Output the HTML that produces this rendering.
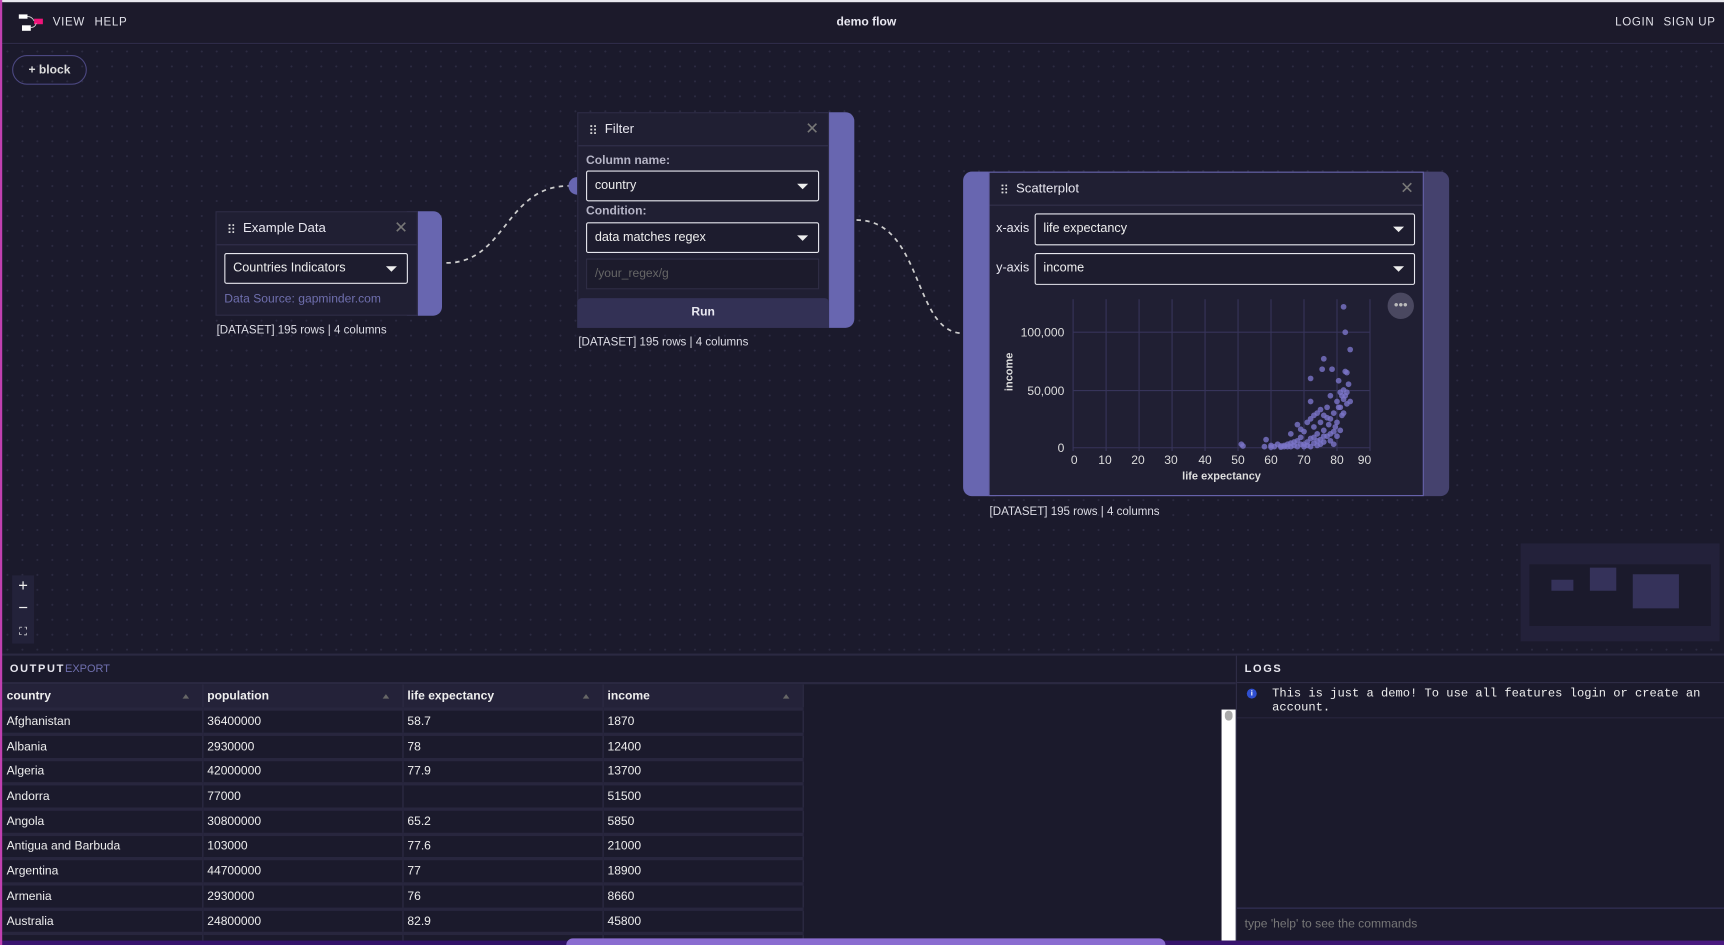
<!DOCTYPE html>
<html><head><meta charset="utf-8"><style>
*{box-sizing:border-box;margin:0;padding:0}
html,body{width:1724px;height:945px;overflow:hidden;background:#1b1a2c}
#s{position:absolute;left:0;top:0;width:1568px;height:859px;overflow:hidden;transform:scale(1.0995,1.1001);transform-origin:0 0;font-family:"Liberation Sans",sans-serif;color:#e8e7f0;background:#1b1a2c}
.a{position:absolute}
.canvas{left:0;top:40px;width:1568px;height:554px;background-color:#1b1a2c;background-image:radial-gradient(#2c2b42 0.8px,transparent 1px);background-size:13.6px 13.6px}
.hdr{left:0;top:0;width:1568px;height:40px;background:#1c1a2b;border-bottom:1px solid #2e2b48;border-top:2px solid #e8e8ee}
.nav{font-size:10.5px;letter-spacing:0.6px;color:#e0e0e8;top:14px}
.node{background:#201f33;border:1px solid #2e2c46}
.nh{height:30px;border-bottom:1px solid #33314d;font-size:12px;line-height:29px;padding-left:24px;position:relative}
.nh:before{content:"";position:absolute;left:10px;top:10px;width:6px;height:9px;background-image:radial-gradient(#ddd 0.9px,transparent 1.1px);background-size:3.5px 3.2px}
.x{position:absolute;right:8px;top:0;color:#777;font-size:15px}
.sel{position:absolute;border:1.5px solid #e6e6ee;border-radius:2px;background:#1d1c2e;font-size:11.5px;line-height:26px;padding-left:7px;color:#eee}
.sel:after{content:"";position:absolute;right:9px;top:11px;border-left:5px solid transparent;border-right:5px solid transparent;border-top:5px solid #eee}
.lbl{font-size:11px;font-weight:bold;color:#b5b4c6}
.ds{font-size:10.5px;color:#dddde6}
table{border-collapse:collapse;font-size:11px}
td,th{border-right:1px solid #2f2d47;border-bottom:3px solid #28263e;height:22.7px;padding:0 4px;text-align:left;width:182px;color:#eee;position:relative}
th{background:#242239;font-weight:bold}
th:after{content:"";position:absolute;right:12px;top:9px;border-left:3px solid transparent;border-right:3px solid transparent;border-bottom:4px solid #666}
.mono{font-family:"Liberation Mono",monospace}
</style></head><body><div id="s">
<div class="a canvas"></div>
<div class="a" style="left:0;top:0;width:2px;height:859px;background:#c040b0;z-index:5"></div>
<div class="a hdr"></div>
<svg class="a" style="left:17px;top:13px" width="24" height="16"><rect x="0" y="0" width="8" height="4" fill="#fff"/><rect x="3" y="10" width="8" height="5" fill="#fff"/><rect x="14" y="4" width="8" height="5" fill="#f0147a"/><path d="M8 2 Q12 2 14 6 M11 12 Q15 12 16 8" stroke="#ccc" fill="none" stroke-width="0.8"/></svg>
<div class="a nav" style="left:48px">VIEW</div>
<div class="a nav" style="left:86px">HELP</div>
<div class="a" style="left:0;width:1576px;top:14px;text-align:center;font-size:11px;font-weight:bold">demo flow</div>
<div class="a nav" style="left:1469px">LOGIN</div>
<div class="a nav" style="left:1513px">SIGN UP</div>
<div class="a" style="left:11px;top:50px;width:68px;height:27px;border:1px solid #4b4780;border-radius:14px;font-size:11px;font-weight:bold;text-align:center;line-height:26px;color:#ddd">+ block</div>

<svg class="a" style="left:0;top:0" width="1568" height="600">
<path d="M406 239 C460 239 460 169 517 169" stroke="#ccc" stroke-width="1.6" fill="none" stroke-dasharray="4 4"/>
<path d="M779 200 C840 200 830 303 876 303" stroke="#ccc" stroke-width="1.6" fill="none" stroke-dasharray="4 4"/>
<path d="M525 161 a8 8 0 0 0 0 16 z" fill="#6866b0"/>
</svg>

<div class="a" style="left:370px;top:192px;width:32px;height:95px;background:#6866b0;border-radius:0 8px 8px 0"></div>
<div class="a node" style="left:196px;top:192px;width:184px;height:95px"><div class="nh">Example Data<span class="x">✕</span></div>
<div class="sel" style="left:7px;top:37px;width:167px;height:28px">Countries Indicators</div>
<div class="a" style="left:7px;top:73px;font-size:11px;color:#6f6fae">Data Source: gapminder.com</div></div>
<div class="a ds" style="left:197px;top:294px">[DATASET] 195 rows | 4 columns</div>

<div class="a" style="left:744px;top:102px;width:33px;height:196px;background:#6866b0;border-radius:0 8px 8px 0"></div>
<div class="a node" style="left:525px;top:102px;width:229px;height:196px"><div class="nh">Filter<span class="x">✕</span></div>
<div class="a lbl" style="left:7px;top:37px">Column name:</div>
<div class="sel" style="left:7px;top:52px;width:212px;height:28px">country</div>
<div class="a lbl" style="left:7px;top:83px">Condition:</div>
<div class="sel" style="left:7px;top:99px;width:212px;height:28px">data matches regex</div>
<div class="a" style="left:7px;top:132px;width:212px;height:28px;border:1px solid #2f2d45;background:#1c1b2c;font-size:11px;color:#666;line-height:26px;padding-left:7px">/your_regex/g</div>
<div class="a" style="left:-1px;top:168px;width:229px;height:27px;background:#333155;border-radius:4px 4px 0 0;font-size:11px;font-weight:bold;text-align:center;line-height:27px">Run</div></div>
<div class="a ds" style="left:526px;top:305px">[DATASET] 195 rows | 4 columns</div>

<div class="a" style="left:876px;top:156px;width:442px;height:295px;background:#45426e;border-radius:8px"></div>
<div class="a" style="left:876px;top:156px;width:30px;height:295px;background:#6866b0;border-radius:8px 0 0 8px"></div>
<div class="a" style="left:899px;top:156px;width:396px;height:295px;background:#201f33;border:1px solid #6a66b0"><div class="nh">Scatterplot<span class="x">✕</span></div>
<div class="a" style="left:6px;top:45px;font-size:11.5px">x-axis</div>
<div class="sel" style="left:41px;top:37px;width:346px;height:29px">life expectancy</div>
<div class="a" style="left:6px;top:81px;font-size:11.5px">y-axis</div>
<div class="sel" style="left:41px;top:73px;width:346px;height:29px">income</div></div>
<svg class="a" style="left:899px;top:260px" width="396" height="185" font-family="Liberation Sans" font-size="11" fill="#ddd">
<g stroke="#37345a" stroke-width="1">
<line x1="77" y1="12" x2="77" y2="150"/><line x1="107" y1="12" x2="107" y2="150"/><line x1="137" y1="12" x2="137" y2="150"/><line x1="167" y1="12" x2="167" y2="150"/><line x1="197" y1="12" x2="197" y2="150"/><line x1="227" y1="12" x2="227" y2="150"/><line x1="257" y1="12" x2="257" y2="150"/><line x1="287" y1="12" x2="287" y2="150"/><line x1="317" y1="12" x2="317" y2="150"/><line x1="347" y1="12" x2="347" y2="150"/>
<line x1="77" y1="147" x2="347" y2="147"/><line x1="77" y1="95" x2="347" y2="95"/><line x1="77" y1="42" x2="347" y2="42"/></g>
<g text-anchor="middle"><text x="78" y="162">0</text><text x="106" y="162">10</text><text x="136" y="162">20</text><text x="166" y="162">30</text><text x="197" y="162">40</text><text x="227" y="162">50</text><text x="257" y="162">60</text><text x="287" y="162">70</text><text x="317" y="162">80</text><text x="342" y="162">90</text>
<text x="212" y="176" font-weight="bold" font-size="10">life expectancy</text></g>
<g text-anchor="end"><text x="69" y="151">0</text><text x="69" y="99">50,000</text><text x="69" y="46">100,000</text></g>
<text transform="translate(22 78) rotate(-90)" text-anchor="middle" font-weight="bold" font-size="10">income</text>
<circle cx="375" cy="18" r="12" fill="#4a4860"/><text x="375" y="21" text-anchor="middle" font-size="12" fill="#bbb">•••</text>
<g fill="#7b74c8" fill-opacity="0.8" id="pts"></g>
</svg>
<div class="a ds" style="left:900px;top:459px">[DATASET] 195 rows | 4 columns</div>

<div class="a" style="left:11px;top:523px;width:20px;height:62px;background:#23223a;font-size:15px;text-align:center;color:#eee;line-height:20px">+<br>−<br><span style="font-size:10px">⛶</span></div>
<div class="a" style="left:1383px;top:494px;width:181px;height:89px;background:#23213a"></div>
<div class="a" style="left:1391px;top:513px;width:165px;height:56px;background:#1b1a2c"></div>
<div class="a" style="left:1411px;top:527px;width:20px;height:10px;background:#35325a"></div>
<div class="a" style="left:1446px;top:516px;width:24px;height:21px;background:#35325a"></div>
<div class="a" style="left:1485px;top:522px;width:42px;height:31px;background:#35325a"></div>

<div class="a" style="left:0;top:594px;width:1568px;height:265px;background:#1b1a2c;border-top:2px solid #2b2942"></div>
<div class="a" style="left:9px;top:603px;font-size:10px;font-weight:bold;letter-spacing:1.5px">OUTPUT<span style="font-weight:normal;letter-spacing:0;color:#6f6fae">EXPORT</span></div>
<div class="a" style="left:0;top:620px;width:1124px;height:2px;background:#2b2942"></div>
<div class="a" style="left:2px;top:622px;width:740px;height:233px;overflow:hidden">
<table>
<tr><th>country</th><th>population</th><th>life expectancy</th><th>income</th></tr>
<tr><td>Afghanistan</td><td>36400000</td><td>58.7</td><td>1870</td></tr>
<tr><td>Albania</td><td>2930000</td><td>78</td><td>12400</td></tr>
<tr><td>Algeria</td><td>42000000</td><td>77.9</td><td>13700</td></tr>
<tr><td>Andorra</td><td>77000</td><td></td><td>51500</td></tr>
<tr><td>Angola</td><td>30800000</td><td>65.2</td><td>5850</td></tr>
<tr><td>Antigua and Barbuda</td><td>103000</td><td>77.6</td><td>21000</td></tr>
<tr><td>Argentina</td><td>44700000</td><td>77</td><td>18900</td></tr>
<tr><td>Armenia</td><td>2930000</td><td>76</td><td>8660</td></tr>
<tr><td>Australia</td><td>24800000</td><td>82.9</td><td>45800</td></tr>
<tr><td>&nbsp;</td><td></td><td></td><td></td></tr>
</table></div>
<div class="a" style="left:1111px;top:645px;width:13px;height:210px;background:#fff"><div style="margin:1px 3px;width:7px;height:9px;border-radius:4px;background:#aaa"></div></div>
<div class="a" style="left:1124px;top:596px;width:444px;height:259px;border-left:1px solid #2f2d47;background:#1b1a2c"></div>
<div class="a" style="left:1132px;top:603px;font-size:10px;font-weight:bold;letter-spacing:1.5px">LOGS</div>
<div class="a" style="left:1125px;top:620px;width:443px;height:1px;background:#2f2d47"></div>
<div class="a" style="left:1134px;top:626px;width:9px;height:9px;border-radius:50%;background:#2f4fd0;font-size:7px;text-align:center;line-height:9px;color:#fff;font-weight:bold">i</div>
<div class="a mono" style="left:1157px;top:625px;font-size:11px;line-height:13px;color:#eee;width:400px">This is just a demo! To use all features login or create an account.</div>
<div class="a" style="left:1125px;top:652px;width:443px;height:1px;background:#28263e"></div>
<div class="a" style="left:1125px;top:825px;width:443px;height:1px;background:#35325a"></div>
<div class="a" style="left:1132px;top:834px;font-size:11px;color:#777">type 'help' to see the commands</div>
<div class="a" style="left:0;top:855px;width:1568px;height:4px;background:linear-gradient(90deg,#3a1570,#2a1060 50%,#4a1a80)"></div>
<div class="a" style="left:515px;top:853px;width:545px;height:6px;border-radius:6px 6px 0 0;background:#8a6cd0"></div>
</div>
<script>
var p=[[51,3],[51.5,1.5],[58,1],[58.5,7],[60,2],[61,1],[62,3],[63,1.5],[64,2],[65,3],[66,12],[66,4],[67,2],[68,20],[68,6],[69,9],[70,3],[70,14],[71,5],[72,25],[72,8],[73,18],[73,4],[74,30],[74,12],[75,22],[75,7],[76,28],[76,15],[77,35],[77,10],[77.5,20],[78,45],[78,25],[78.5,68],[79,30],[79.5,18],[80,40],[80,22],[80.5,58],[81,48],[81,35],[81.5,45],[82,50],[82,42],[82,30],[82.5,66],[83,65],[83,38],[83.5,55],[84,40],[84,85],[82,122],[82.5,100],[72,60],[72,40],[76,77],[75.5,68],[79,3],[68,1],[63,0.5],[60,0.5],[74,2],[70,1],[76,5],[80,10],[78,12],[77,26],[75,33],[73,28],[71,22],[69,16],[80.5,35],[81.5,28],[82.5,45],[83,48],[81,15],[66,1],[67,5],[69,3],[71,2],[72,1],[73,9],[74,6],[75,3],[76,10],[78,6],[79,14],[65,1],[64,1]];
var g=document.getElementById('pts'),h='';
p.forEach(function(q){h+='<circle cx="'+(77+q[0]*3)+'" cy="'+(147-q[1]*1.05)+'" r="2.6"/>'});
g.innerHTML=h;
</script>
</body></html>
